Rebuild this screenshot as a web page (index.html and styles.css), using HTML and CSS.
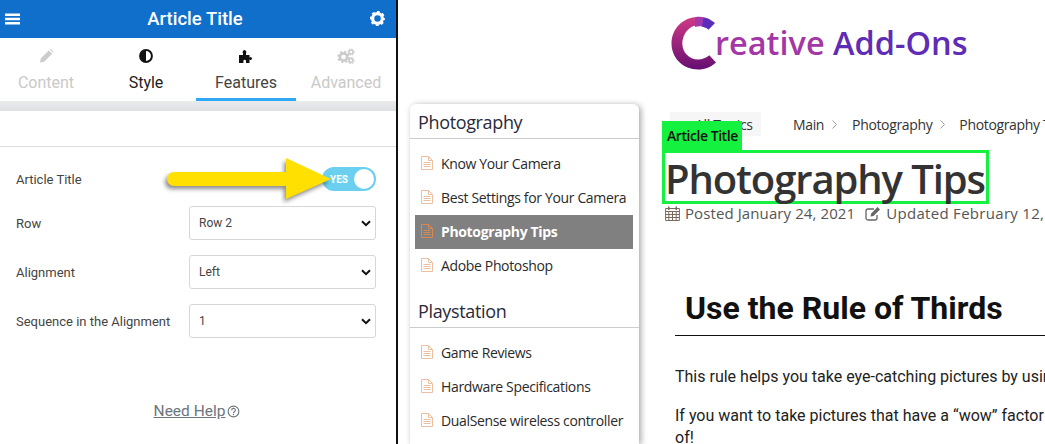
FILE: index.html
```html
<!DOCTYPE html>
<html lang="en">
<head>
<meta charset="utf-8">
<title>Article Title</title>
<link rel="stylesheet" href="styles.css">
</head>
<body>
<div class="page">
  <aside class="panel">
    <header class="panel-head">
      <svg class="head-icon" viewBox="0 0 15 12" width="15" height="12"><path d="M0 .5h15v2.4H0zM0 4.8h15v2.4H0zM0 9.1h15v2.4H0z" fill="#fff"/></svg>
      <h1 class="panel-title">Article Title</h1>
      <svg class="head-icon" viewBox="0 0 16 16" width="15" height="15"><circle cx="8" cy="8" r="5.2" fill="none" stroke="#fff" stroke-width="3.4"/><circle cx="8" cy="8" r="6.8" fill="none" stroke="#fff" stroke-width="2.6" stroke-dasharray="2.8 2.54" stroke-dashoffset="1.4"/></svg>
    </header>
    <nav class="tabs">
      <div class="tab tab-off">
        <svg viewBox="0 0 16 16" width="15" height="15"><path d="M1 15l1-4.5 8.5-8.5 3.5 3.5L5.500 14z M11.500 1l1-.5 3 3-.5 1z" fill="#ccc"/></svg>
        <span>Content</span>
      </div>
      <div class="tab">
        <svg viewBox="0 0 14 14" width="14" height="14"><circle cx="7" cy="7" r="5.900" fill="#fff" stroke="#111" stroke-width="2"/><path d="M7 1.500a5.500 5.500 0 0 0 0 11z" fill="#111"/></svg>
        <span>Style</span>
      </div>
      <div class="tab tab-on">
        <svg viewBox="0 0 16 16" width="16" height="16"><path d="M1 7h4V5.200a1.900 1.900 0 1 1 3 0V7h3.500v2.400a1.500 1.500 0 1 1 0 2.200V15H8v-2a1.300 1.300 0 0 0-2.600 0v2H1z" fill="#111"/></svg>
        <span>Features</span>
      </div>
      <div class="tab tab-off">
        <svg viewBox="0 0 18 16" width="18" height="16"><circle cx="6.500" cy="9" r="3.600" fill="none" stroke="#ccc" stroke-width="2.600"/><circle cx="6.500" cy="9" r="5.300" fill="none" stroke="#ccc" stroke-width="2" stroke-dasharray="2 2.160"/><circle cx="14" cy="4" r="1.900" fill="none" stroke="#ccc" stroke-width="1.500"/><circle cx="14" cy="4" r="3" fill="none" stroke="#ccc" stroke-width="1.200" stroke-dasharray="1.300 1.060"/><circle cx="14" cy="12.500" r="1.900" fill="none" stroke="#ccc" stroke-width="1.500"/><circle cx="14" cy="12.500" r="3" fill="none" stroke="#ccc" stroke-width="1.200" stroke-dasharray="1.300 1.060"/></svg>
        <span>Advanced</span>
      </div>
    </nav>
    <div class="band"></div>
    <div class="blank"></div>
    <form class="fields">
      <div class="field field-toggle">
        <span class="field-label">Article Title</span>
        <div class="toggle"><span class="toggle-text">YES</span><span class="toggle-knob"></span></div>
      </div>
      <div class="field">
        <label class="field-label" for="f-row">Row</label>
        <div class="select-wrap">
          <select id="f-row" class="select"><option>Row 2</option></select>
          <svg class="chevron" viewBox="0 0 10 7" width="10" height="7"><path d="M1 1.200l4 4 4-4" fill="none" stroke="#111" stroke-width="2"/></svg>
        </div>
      </div>
      <div class="field">
        <label class="field-label" for="f-align">Alignment</label>
        <div class="select-wrap">
          <select id="f-align" class="select"><option>Left</option></select>
          <svg class="chevron" viewBox="0 0 10 7" width="10" height="7"><path d="M1 1.200l4 4 4-4" fill="none" stroke="#111" stroke-width="2"/></svg>
        </div>
      </div>
      <div class="field">
        <label class="field-label" for="f-seq">Sequence in the Alignment</label>
        <div class="select-wrap">
          <select id="f-seq" class="select"><option>1</option></select>
          <svg class="chevron" viewBox="0 0 10 7" width="10" height="7"><path d="M1 1.200l4 4 4-4" fill="none" stroke="#111" stroke-width="2"/></svg>
        </div>
      </div>
    </form>
    <a class="help" href="#"><span class="help-text">Need Help</span><svg viewBox="0 0 14 14" width="13" height="13"><circle cx="7" cy="7" r="5.800" fill="none" stroke="#6c757d" stroke-width="1.200"/><path d="M5 5.600a2 2 0 1 1 3 1.700c-.7.400-1 .7-1 1.500" fill="none" stroke="#6c757d" stroke-width="1.200"/><path d="M6.400 9.700h1.200v1.200H6.400z" fill="#6c757d"/></svg></a>
    <svg class="arrow" viewBox="0 0 176 52" width="176" height="52"><path d="M7 15h112V1l45 21-45 20V29H7a7 7 0 0 1 0-14z" fill="#ffe000"/></svg>
  </aside>

  <main class="site">
    <div class="brand">
      <svg class="brand-mark" viewBox="0 0 46 54" width="46" height="54">
        <defs><linearGradient id="cg" x1="0" y1="0" x2="0" y2="1"><stop offset="0" stop-color="#d03a85"/><stop offset="1" stop-color="#650f72"/></linearGradient></defs>
        <path d="M27 9.300V1C12 1 0.500 12.800.5 27.500S12.500 53.500 27 53.500c7 0 13-2.500 18-7l-6.700-7.200c-3 2.700-6.800 4.200-11.300 4.200-8.800 0-15.700-7.200-15.700-16S18 9.300 27 9.300z" fill="url(#cg)"/>
        <path d="M24 1.200V11c3.500-1 7.500-1 10.500.8L39 3.500C34.500 1 29 .3 24 1.200z" fill="#a537ac"/>
        <path d="M32.500 1.700l-1.500 9c2.600.2 4.700 1.300 6.500 3L44 7c-3-2.800-7-4.600-11.500-5.300z" fill="#5b2cbb"/>
      </svg>
      <span class="brand-name"><span class="brand-a">reative</span> <span class="brand-b">Add-Ons</span></span>
    </div>
    <div class="content">
      <aside class="sidebar">
        <section class="group">
          <h2 class="group-title">Photography</h2>
          <ul class="group-list">
            <li class="item"><svg class="doc" viewBox="0 0 12 14" width="12" height="14"><path d="M.5.500h7l4 4v9H.500zM7.500.500v4h4M2.500 6.500h7M2.500 8.500h7M2.500 10.500h7" fill="none" stroke="#ecbfa0"/></svg>Know Your Camera</li>
            <li class="item"><svg class="doc" viewBox="0 0 12 14" width="12" height="14"><path d="M.5.500h7l4 4v9H.500zM7.500.500v4h4M2.500 6.500h7M2.500 8.500h7M2.500 10.500h7" fill="none" stroke="#ecbfa0"/></svg>Best Settings for Your Camera</li>
            <li class="item item-on"><svg class="doc" viewBox="0 0 12 14" width="12" height="14"><path d="M.5.500h7l4 4v9H.500zM7.500.500v4h4M2.500 6.500h7M2.500 8.500h7M2.500 10.500h7" fill="none" stroke="#d68a55"/></svg>Photography Tips</li>
            <li class="item"><svg class="doc" viewBox="0 0 12 14" width="12" height="14"><path d="M.5.500h7l4 4v9H.500zM7.500.500v4h4M2.500 6.500h7M2.500 8.500h7M2.500 10.500h7" fill="none" stroke="#ecbfa0"/></svg>Adobe Photoshop</li>
          </ul>
        </section>
        <section class="group">
          <h2 class="group-title">Playstation</h2>
          <ul class="group-list">
            <li class="item"><svg class="doc" viewBox="0 0 12 14" width="12" height="14"><path d="M.5.500h7l4 4v9H.500zM7.500.500v4h4M2.500 6.500h7M2.500 8.500h7M2.500 10.500h7" fill="none" stroke="#ecbfa0"/></svg>Game Reviews</li>
            <li class="item"><svg class="doc" viewBox="0 0 12 14" width="12" height="14"><path d="M.5.500h7l4 4v9H.500zM7.500.500v4h4M2.500 6.500h7M2.500 8.500h7M2.500 10.500h7" fill="none" stroke="#ecbfa0"/></svg>Hardware Specifications</li>
            <li class="item"><svg class="doc" viewBox="0 0 12 14" width="12" height="14"><path d="M.5.500h7l4 4v9H.500zM7.500.500v4h4M2.500 6.500h7M2.500 8.500h7M2.500 10.500h7" fill="none" stroke="#ecbfa0"/></svg>DualSense wireless controller</li>
          </ul>
        </section>
      </aside>
      <article class="article">
        <div class="crumbs">
          <span class="topics">All Topics</span>
          <span class="crumb">Main</span>
          <svg class="sep" viewBox="0 0 5 9" width="5" height="9"><path d="M.5.500l4 4-4 4" fill="none" stroke="#999"/></svg>
          <span class="crumb">Photography</span>
          <svg class="sep sep-last" viewBox="0 0 5 9" width="5" height="9"><path d="M.5.500l4 4-4 4" fill="none" stroke="#999"/></svg>
          <span class="crumb">Photography Tips</span>
        </div>
        <span class="tag">Article Title</span>
        <h1 class="title">Photography Tips</h1>
        <div class="meta">
          <svg viewBox="0 0 15 15" width="15" height="15"><path d="M.6 2.500h13.800v12H.600zM.6 5.500h13.800M3.800 5.500v9M7.500 5.500v9M11.200 5.500v9M.6 8.500h13.800M.6 11.500h13.800" fill="none" stroke="#7a6a5e"/><path d="M3 .5h1.500v3.500H3zM10.500.5H12v3.500h-1.500z" fill="#7a6a5e"/></svg>
          <span>Posted January 24, 2021</span>
          <svg class="meta-gap" viewBox="0 0 16 15" width="16" height="15"><path d="M12 9v3a2 2 0 0 1-2 2H3a2 2 0 0 1-2-2V5a2 2 0 0 1 2-2h6" fill="none" stroke="#666" stroke-width="1.300"/><path d="M5.500 10.500l.7-3L12.500 1l2.500 2.500L8.500 10z" fill="#666"/></svg>
          <span class="meta-wide">Updated February 12, 2021</span>
        </div>
        <h2 class="heading">Use the Rule of Thirds</h2>
        <p class="para">This rule helps you take eye-catching pictures by using</p>
        <p class="para para-2">If you want to take pictures that have a “wow” factor<br>of!</p>
      </article>
    </div>
  </main>
</div>
</body>
</html>
```
FILE: styles.css
```css
* { box-sizing: border-box; }
html, body { margin: 0; padding: 0; height: 444px; overflow: hidden; background: #fff; }
body { font-family: Roboto, sans-serif; color: #222; }
.page { display: flex; width: 1045px; height: 444px; overflow: hidden; }

/* left panel */
.panel { position: relative; flex: 0 0 397px; height: 444px; border-right: 2px solid #111; background: #fff; }
.panel-head { display: flex; align-items: center; justify-content: space-between; height: 38px; padding: 0 11px 0 5px; background: #106fcb; }
.panel-title { margin: 0; font-size: 18.5px; font-weight: 500; color: #fff; line-height: 36px; }
.head-icon { display: block; margin-bottom: 1px; }
.tabs { display: grid; grid-template-columns: repeat(4, 100px); height: 63px; margin-left: -4px; }
.tab { display: flex; flex-direction: column; align-items: center; padding-top: 10px; height: 63px; font-size: 16px; color: #222; border-bottom: 3px solid transparent; }
.tab svg { display: block; height: 16px; }
.tab span { margin-top: 9px; line-height: 20px; }
.tab-off { color: #c9c9c9; }
.tab-on { border-bottom-color: #2fa8f5; color: #444; }
.band { height: 10px; background: linear-gradient(#e9eaec, #dfe0e4); }
.blank { height: 36px; border-bottom: 1px solid #ddd; }
.fields { display: flex; flex-direction: column; padding: 20px 20px 0 16px; }
.field { display: flex; align-items: center; justify-content: space-between; height: 34px; margin-bottom: 15px; }
.field-toggle { height: 24px; margin-bottom: 15px; }
.field-label { font-size: 13px; color: #444; }
.toggle { display: flex; align-items: center; justify-content: space-between; width: 54px; height: 24px; padding: 0 1px 0 8px; border-radius: 12px; background: #6bd0f0; }
.toggle-text { font-size: 10px; font-weight: 700; color: #fff; }
.toggle-knob { width: 20px; height: 20px; margin-right: 1px; border-radius: 50%; background: #fff; }
.select-wrap { position: relative; width: 187px; height: 34px; }
.select { display: block; width: 100%; height: 34px; padding: 0 9px; appearance: none; border: 1px solid #d5d7da; border-radius: 3px; background: #fff; font-family: Roboto, sans-serif; font-size: 12px; color: #444; }
.chevron { position: absolute; right: 5px; top: 14px; }
.help { display: flex; align-items: center; justify-content: center; gap: 2px; margin-top: 49px; padding-right: 2px; font-size: 15.5px; color: #6c757d; text-decoration: none; }
.help-text { text-decoration: underline; }
.arrow { position: absolute; left: 167px; top: 157px; filter: drop-shadow(-2px 3px 2px rgba(0,0,0,.45)); overflow: visible; }

/* site */
.site { flex: 1; min-width: 0; font-family: "Open Sans", sans-serif; overflow: hidden; }
.brand { display: flex; height: 104px; padding: 16px 0 0 273px; }
.brand-mark { flex: none; display: block; }
.brand-name { margin-left: -2px; font-size: 32.5px; font-weight: 600; line-height: 54px; white-space: nowrap; }
.brand-a { color: #a237a5; }
.brand-b { color: #5f2db5; }
.content { display: flex; align-items: flex-start; padding-left: 12px; }
.sidebar { flex: 0 0 229px; height: 340px; margin-right: 23px; border-radius: 6px 6px 0 0; background: #fff; box-shadow: 2px 1px 6px rgba(0,0,0,.35); overflow: hidden; }
.group { margin-bottom: 11px; }
.group + .group { margin-top: -1px; }
.group-title { height: 35px; margin: 0; padding: 5px 8px 0; border-bottom: 1px solid #ccc; font-size: 18px; font-weight: 400; letter-spacing: -.35px; line-height: 26px; color: #2a2a3a; }
.group-list { list-style: none; margin: 8px 0 0; padding: 0 6px 0 5px; }
.group-list .item { display: flex; align-items: center; height: 34px; padding: 0 0 2px 6px; font-size: 14px; letter-spacing: -.35px; color: #2a2a2a; white-space: nowrap; }
.doc { flex: none; margin-right: 8px; }
.group-list .item-on { background: #808080; color: #fff; font-weight: 700; }
.article { position: relative; flex: none; width: 400px; }
.crumbs { display: flex; align-items: center; width: 500px; height: 24px; margin-top: 8px; padding-left: 8px; font-size: 14px; letter-spacing: -.35px; color: #333; white-space: nowrap; }
.crumb { flex: none; }
.topics { flex: none; width: 91px; height: 24px; margin-right: 32px; padding-left: 25px; line-height: 25px; background: #f6f6f6; }
.sep { flex: none; margin: 0 15px 0 8px; }
.sep-last { margin-right: 14px; }
.tag { position: absolute; left: 0; top: 17px; width: 80px; height: 29px; padding-left: 5px; background: #14f13f; font-size: 14px; font-weight: 600; letter-spacing: -.45px; line-height: 30px; color: #111; white-space: nowrap; }
.title { width: 327px; height: 54px; margin: 14px 0 0; border: 3px solid #14f13f; font-size: 40px; font-weight: 600; letter-spacing: -1.1px; line-height: 51px; color: #333; white-space: nowrap; }
.meta { display: flex; align-items: center; width: 500px; height: 18px; padding-left: 3px; font-size: 15px; letter-spacing: .1px; line-height: 18px; color: #555; white-space: nowrap; }
.meta svg { flex: none; margin-right: 5px; }
.meta .meta-gap { margin-left: 10px; }
.meta-wide { letter-spacing: .3px; }
.heading { width: 382px; height: 51px; margin: 63px 0 0 13px; padding: 0 0 0 10px; border-bottom: 1px solid #111; font-family: Roboto, sans-serif; font-size: 32px; font-weight: 700; line-height: 47px; color: #111; white-space: nowrap; }
.para { margin: 30px 0 0 13px; font-family: Roboto, sans-serif; font-size: 16px; line-height: 22px; color: #222; white-space: nowrap; }
.para-2 { margin-top: 17px; }
```
